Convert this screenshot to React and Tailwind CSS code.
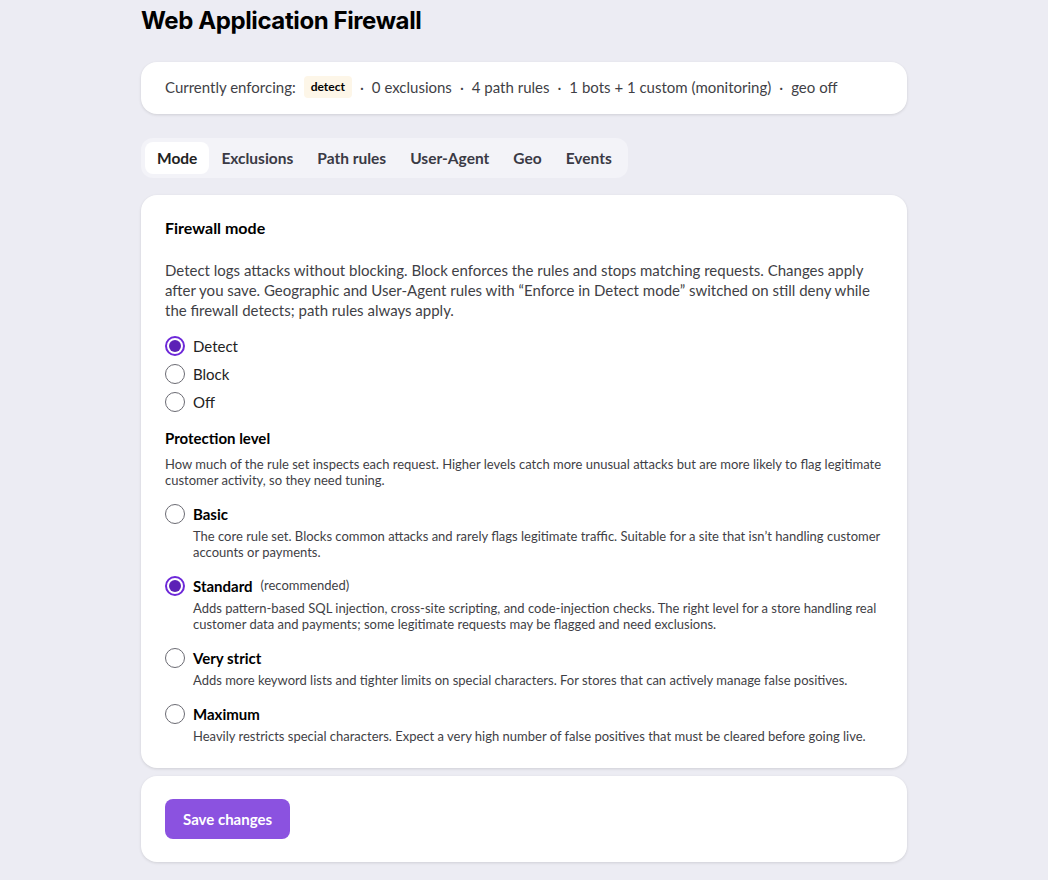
import React from "react";

const font = { fontFamily: "Lato, 'Noto Sans', sans-serif" };

function Radio({ checked }) {
  return checked ? (
    <span className="flex h-5 w-5 shrink-0 items-center justify-center rounded-full border-2 border-[#6d28d9] bg-white">
      <span className="h-3 w-3 rounded-full bg-[#5b21b6]" />
    </span>
  ) : (
    <span className="h-5 w-5 shrink-0 rounded-full border border-[#6b6b73] bg-white" />
  );
}

const modes = [
  { label: "Detect", checked: true },
  { label: "Block" },
  { label: "Off" },
];

const levels = [
  {
    label: "Basic",
    desc: "The core rule set. Blocks common attacks and rarely flags legitimate traffic. Suitable for a site that isn\u2019t handling customer accounts or payments.",
  },
  {
    label: "Standard",
    extra: "(recommended)",
    checked: true,
    desc: "Adds pattern-based SQL injection, cross-site scripting, and code-injection checks. The right level for a store handling real customer data and payments; some legitimate requests may be flagged and need exclusions.",
  },
  {
    label: "Very strict",
    desc: "Adds more keyword lists and tighter limits on special characters. For stores that can actively manage false positives.",
  },
  {
    label: "Maximum",
    desc: "Heavily restricts special characters. Expect a very high number of false positives that must be cleared before going live.",
  },
];

const tabs = ["Mode", "Exclusions", "Path rules", "User-Agent", "Geo", "Events"];

export default function App() {
  return (
    <div className="min-h-[880px] bg-[#ececf3] text-[#111]" style={font}>
      <div className="mx-auto w-[766px] pb-4">
        <h1
          className="pt-[5px] text-[24px] font-bold leading-[32px] tracking-[-0.4px] text-black"
          style={{ fontFamily: "Inter, sans-serif" }}
        >
          Web Application Firewall
        </h1>

        <div className="mt-[25px] flex h-[52px] items-center rounded-2xl bg-white px-6 pb-[2px] text-[15px] text-[#3f3f46] shadow-[0_1px_3px_rgba(0,0,0,0.12)]">
          <span>Currently enforcing:</span>
          <span className="ml-2 rounded bg-[#fdf6e8] px-[7px] py-[2px] text-[12px] font-bold text-black">
            detect
          </span>
          <span className="mx-2">·</span>
          <span>0 exclusions</span>
          <span className="mx-2">·</span>
          <span>4 path rules</span>
          <span className="mx-2">·</span>
          <span>1 bots + 1 custom (monitoring)</span>
          <span className="mx-2">·</span>
          <span>geo off</span>
        </div>

        <div className="mt-6 inline-flex rounded-xl bg-[#f3f3f8] p-1">
          {tabs.map((t, i) => (
            <div
              key={t}
              className={
                "flex h-8 items-center rounded-lg px-3 pt-[2px] text-[15.5px] font-bold " +
                (i === 0 ? "bg-white text-[#222]" : "text-[#3a3a45]")
              }
            >
              {t}
            </div>
          ))}
        </div>

        <div className="mt-[17px] rounded-2xl bg-white px-6 pt-[21px] pb-6 shadow-[0_1px_3px_rgba(0,0,0,0.12)]">
          <h2 className="text-[16px] font-bold leading-6 text-black">Firewall mode</h2>
          <p className="mt-[20px] text-[15px] leading-5 text-[#3f3f46]">
            Detect logs attacks without blocking. Block enforces the rules and stops matching requests. Changes apply after you save. Geographic and User-Agent rules with “Enforce in Detect mode” switched on still deny while the firewall detects; path rules always apply.
          </p>
          <div className="mt-[16px] flex flex-col gap-2">
            {modes.map((m) => (
              <label key={m.label} className="flex h-5 items-center gap-2 text-[15px] text-[#222]">
                <Radio checked={m.checked} />
                <span>{m.label}</span>
              </label>
            ))}
          </div>

          <h3 className="mt-[16px] text-[15px] font-bold leading-5 text-black">Protection level</h3>
          <p className="mt-[8px] text-[13px] leading-4 text-[#3f3f46]">
            How much of the rule set inspects each request. Higher levels catch more unusual attacks but are more likely to flag legitimate customer activity, so they need tuning.
          </p>

          <div className="mt-[16px] flex flex-col gap-4">
            {levels.map((l) => (
              <div key={l.label} className="flex flex-col">
                <div className="flex h-5 items-center gap-2">
                  <Radio checked={l.checked} />
                  <span className="text-[15px] font-bold text-black">{l.label}</span>
                  {l.extra && <span className="text-[13px] text-[#3f3f46]">{l.extra}</span>}
                </div>
                <p className="mt-[4px] pl-7 text-[13px] leading-4 text-[#3f3f46]">{l.desc}</p>
              </div>
            ))}
          </div>
        </div>

        <div className="mt-2 rounded-2xl bg-white px-6 py-[23px] shadow-[0_1px_3px_rgba(0,0,0,0.12)]">
          <button className="h-10 rounded-lg bg-[#8b52e0] px-[18px] text-[15px] font-bold text-white">
            Save changes
          </button>
        </div>
      </div>
    </div>
  );
}
